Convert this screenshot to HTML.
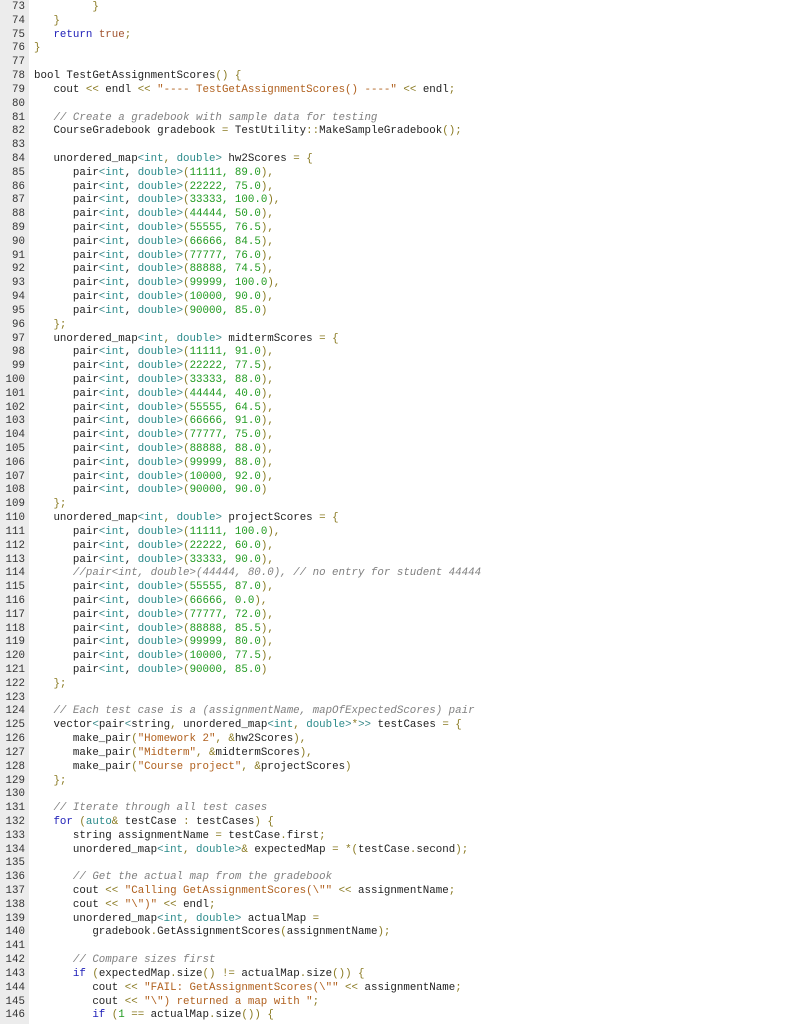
<!DOCTYPE html>
<html><head><meta charset="utf-8"><style>
body{margin:0;background:#fff;width:791px;height:1024px;overflow:hidden;position:relative}
#g{position:absolute;left:0;top:0;width:29px;height:1024px;background:#ececec}
pre{margin:0;position:absolute;top:1px;font-family:"Liberation Mono",monospace;font-size:10.8px;line-height:13.81px;white-space:pre}
#nums{left:0;width:25px;text-align:right;color:#333}
#code{left:34px;color:#1e1e1e}
.k{color:#2020b8}.t{color:#2a8a8a}.s{color:#b0601e}.n{color:#1f9a1f}.c{color:#808080;font-style:italic}.p{color:#8a7a22}.a{color:#3a8a8a}.b{color:#a0522d}
</style></head><body><div id="g"></div>
<pre id="nums">73
74
75
76
77
78
79
80
81
82
83
84
85
86
87
88
89
90
91
92
93
94
95
96
97
98
99
100
101
102
103
104
105
106
107
108
109
110
111
112
113
114
115
116
117
118
119
120
121
122
123
124
125
126
127
128
129
130
131
132
133
134
135
136
137
138
139
140
141
142
143
144
145
146</pre>
<pre id="code">         <span class="p">}</span>
   <span class="p">}</span>
   <span class="k">return</span> <span class="b">true</span><span class="p">;</span>
<span class="p">}</span>

bool TestGetAssignmentScores<span class="p">() {</span>
   cout <span class="p">&lt;&lt;</span> endl <span class="p">&lt;&lt;</span> <span class="s">"---- TestGetAssignmentScores() ----"</span> <span class="p">&lt;&lt;</span> endl<span class="p">;</span>

   <span class="c">// Create a gradebook with sample data for testing</span>
   CourseGradebook gradebook <span class="p">=</span> TestUtility<span class="p">::</span>MakeSampleGradebook<span class="p">();</span>

   unordered_map<span class="a">&lt;</span><span class="t">int</span><span class="p">,</span> <span class="t">double</span><span class="a">&gt;</span> hw2Scores <span class="p">= {</span>
      pair<span class="a">&lt;</span><span class="t">int</span>, <span class="t">double</span><span class="a">&gt;</span><span class="p">(</span><span class="n">11111, 89.0</span><span class="p">),</span>
      pair<span class="a">&lt;</span><span class="t">int</span>, <span class="t">double</span><span class="a">&gt;</span><span class="p">(</span><span class="n">22222, 75.0</span><span class="p">),</span>
      pair<span class="a">&lt;</span><span class="t">int</span>, <span class="t">double</span><span class="a">&gt;</span><span class="p">(</span><span class="n">33333, 100.0</span><span class="p">),</span>
      pair<span class="a">&lt;</span><span class="t">int</span>, <span class="t">double</span><span class="a">&gt;</span><span class="p">(</span><span class="n">44444, 50.0</span><span class="p">),</span>
      pair<span class="a">&lt;</span><span class="t">int</span>, <span class="t">double</span><span class="a">&gt;</span><span class="p">(</span><span class="n">55555, 76.5</span><span class="p">),</span>
      pair<span class="a">&lt;</span><span class="t">int</span>, <span class="t">double</span><span class="a">&gt;</span><span class="p">(</span><span class="n">66666, 84.5</span><span class="p">),</span>
      pair<span class="a">&lt;</span><span class="t">int</span>, <span class="t">double</span><span class="a">&gt;</span><span class="p">(</span><span class="n">77777, 76.0</span><span class="p">),</span>
      pair<span class="a">&lt;</span><span class="t">int</span>, <span class="t">double</span><span class="a">&gt;</span><span class="p">(</span><span class="n">88888, 74.5</span><span class="p">),</span>
      pair<span class="a">&lt;</span><span class="t">int</span>, <span class="t">double</span><span class="a">&gt;</span><span class="p">(</span><span class="n">99999, 100.0</span><span class="p">),</span>
      pair<span class="a">&lt;</span><span class="t">int</span>, <span class="t">double</span><span class="a">&gt;</span><span class="p">(</span><span class="n">10000, 90.0</span><span class="p">),</span>
      pair<span class="a">&lt;</span><span class="t">int</span>, <span class="t">double</span><span class="a">&gt;</span><span class="p">(</span><span class="n">90000, 85.0</span><span class="p">)</span>
   <span class="p">};</span>
   unordered_map<span class="a">&lt;</span><span class="t">int</span><span class="p">,</span> <span class="t">double</span><span class="a">&gt;</span> midtermScores <span class="p">= {</span>
      pair<span class="a">&lt;</span><span class="t">int</span>, <span class="t">double</span><span class="a">&gt;</span><span class="p">(</span><span class="n">11111, 91.0</span><span class="p">),</span>
      pair<span class="a">&lt;</span><span class="t">int</span>, <span class="t">double</span><span class="a">&gt;</span><span class="p">(</span><span class="n">22222, 77.5</span><span class="p">),</span>
      pair<span class="a">&lt;</span><span class="t">int</span>, <span class="t">double</span><span class="a">&gt;</span><span class="p">(</span><span class="n">33333, 88.0</span><span class="p">),</span>
      pair<span class="a">&lt;</span><span class="t">int</span>, <span class="t">double</span><span class="a">&gt;</span><span class="p">(</span><span class="n">44444, 40.0</span><span class="p">),</span>
      pair<span class="a">&lt;</span><span class="t">int</span>, <span class="t">double</span><span class="a">&gt;</span><span class="p">(</span><span class="n">55555, 64.5</span><span class="p">),</span>
      pair<span class="a">&lt;</span><span class="t">int</span>, <span class="t">double</span><span class="a">&gt;</span><span class="p">(</span><span class="n">66666, 91.0</span><span class="p">),</span>
      pair<span class="a">&lt;</span><span class="t">int</span>, <span class="t">double</span><span class="a">&gt;</span><span class="p">(</span><span class="n">77777, 75.0</span><span class="p">),</span>
      pair<span class="a">&lt;</span><span class="t">int</span>, <span class="t">double</span><span class="a">&gt;</span><span class="p">(</span><span class="n">88888, 88.0</span><span class="p">),</span>
      pair<span class="a">&lt;</span><span class="t">int</span>, <span class="t">double</span><span class="a">&gt;</span><span class="p">(</span><span class="n">99999, 88.0</span><span class="p">),</span>
      pair<span class="a">&lt;</span><span class="t">int</span>, <span class="t">double</span><span class="a">&gt;</span><span class="p">(</span><span class="n">10000, 92.0</span><span class="p">),</span>
      pair<span class="a">&lt;</span><span class="t">int</span>, <span class="t">double</span><span class="a">&gt;</span><span class="p">(</span><span class="n">90000, 90.0</span><span class="p">)</span>
   <span class="p">};</span>
   unordered_map<span class="a">&lt;</span><span class="t">int</span><span class="p">,</span> <span class="t">double</span><span class="a">&gt;</span> projectScores <span class="p">= {</span>
      pair<span class="a">&lt;</span><span class="t">int</span>, <span class="t">double</span><span class="a">&gt;</span><span class="p">(</span><span class="n">11111, 100.0</span><span class="p">),</span>
      pair<span class="a">&lt;</span><span class="t">int</span>, <span class="t">double</span><span class="a">&gt;</span><span class="p">(</span><span class="n">22222, 60.0</span><span class="p">),</span>
      pair<span class="a">&lt;</span><span class="t">int</span>, <span class="t">double</span><span class="a">&gt;</span><span class="p">(</span><span class="n">33333, 90.0</span><span class="p">),</span>
      <span class="c">//pair&lt;int, double&gt;(44444, 80.0), // no entry for student 44444</span>
      pair<span class="a">&lt;</span><span class="t">int</span>, <span class="t">double</span><span class="a">&gt;</span><span class="p">(</span><span class="n">55555, 87.0</span><span class="p">),</span>
      pair<span class="a">&lt;</span><span class="t">int</span>, <span class="t">double</span><span class="a">&gt;</span><span class="p">(</span><span class="n">66666, 0.0</span><span class="p">),</span>
      pair<span class="a">&lt;</span><span class="t">int</span>, <span class="t">double</span><span class="a">&gt;</span><span class="p">(</span><span class="n">77777, 72.0</span><span class="p">),</span>
      pair<span class="a">&lt;</span><span class="t">int</span>, <span class="t">double</span><span class="a">&gt;</span><span class="p">(</span><span class="n">88888, 85.5</span><span class="p">),</span>
      pair<span class="a">&lt;</span><span class="t">int</span>, <span class="t">double</span><span class="a">&gt;</span><span class="p">(</span><span class="n">99999, 80.0</span><span class="p">),</span>
      pair<span class="a">&lt;</span><span class="t">int</span>, <span class="t">double</span><span class="a">&gt;</span><span class="p">(</span><span class="n">10000, 77.5</span><span class="p">),</span>
      pair<span class="a">&lt;</span><span class="t">int</span>, <span class="t">double</span><span class="a">&gt;</span><span class="p">(</span><span class="n">90000, 85.0</span><span class="p">)</span>
   <span class="p">};</span>

   <span class="c">// Each test case is a (assignmentName, mapOfExpectedScores) pair</span>
   vector<span class="a">&lt;</span>pair<span class="a">&lt;</span>string<span class="p">,</span> unordered_map<span class="a">&lt;</span><span class="t">int</span><span class="p">,</span> <span class="t">double</span><span class="a">&gt;</span><span class="p">*</span><span class="a">&gt;&gt;</span> testCases <span class="p">= {</span>
      make_pair<span class="p">(</span><span class="s">"Homework 2"</span><span class="p">,</span> <span class="p">&amp;</span>hw2Scores<span class="p">),</span>
      make_pair<span class="p">(</span><span class="s">"Midterm"</span><span class="p">,</span> <span class="p">&amp;</span>midtermScores<span class="p">),</span>
      make_pair<span class="p">(</span><span class="s">"Course project"</span><span class="p">,</span> <span class="p">&amp;</span>projectScores<span class="p">)</span>
   <span class="p">};</span>

   <span class="c">// Iterate through all test cases</span>
   <span class="k">for</span> <span class="p">(</span><span class="t">auto</span><span class="p">&amp;</span> testCase <span class="p">:</span> testCases<span class="p">) {</span>
      string assignmentName <span class="p">=</span> testCase<span class="p">.</span>first<span class="p">;</span>
      unordered_map<span class="a">&lt;</span><span class="t">int</span><span class="p">,</span> <span class="t">double</span><span class="a">&gt;</span><span class="p">&amp;</span> expectedMap <span class="p">= *(</span>testCase<span class="p">.</span>second<span class="p">);</span>

      <span class="c">// Get the actual map from the gradebook</span>
      cout <span class="p">&lt;&lt;</span> <span class="s">"Calling GetAssignmentScores(\""</span> <span class="p">&lt;&lt;</span> assignmentName<span class="p">;</span>
      cout <span class="p">&lt;&lt;</span> <span class="s">"\")"</span> <span class="p">&lt;&lt;</span> endl<span class="p">;</span>
      unordered_map<span class="a">&lt;</span><span class="t">int</span><span class="p">,</span> <span class="t">double</span><span class="a">&gt;</span> actualMap <span class="p">=</span>
         gradebook<span class="p">.</span>GetAssignmentScores<span class="p">(</span>assignmentName<span class="p">);</span>

      <span class="c">// Compare sizes first</span>
      <span class="k">if</span> <span class="p">(</span>expectedMap<span class="p">.</span>size<span class="p">() !=</span> actualMap<span class="p">.</span>size<span class="p">()) {</span>
         cout <span class="p">&lt;&lt;</span> <span class="s">"FAIL: GetAssignmentScores(\""</span> <span class="p">&lt;&lt;</span> assignmentName<span class="p">;</span>
         cout <span class="p">&lt;&lt;</span> <span class="s">"\") returned a map with "</span><span class="p">;</span>
         <span class="k">if</span> <span class="p">(</span><span class="n">1</span> <span class="p">==</span> actualMap<span class="p">.</span>size<span class="p">()) {</span></pre>
</body></html>
